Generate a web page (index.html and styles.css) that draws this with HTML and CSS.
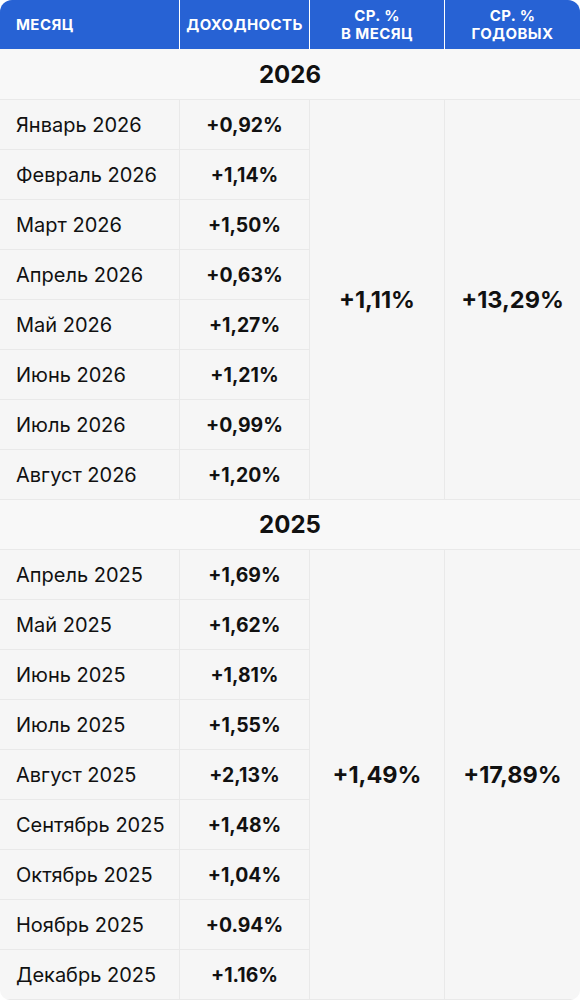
FILE: index.html
```html
<!DOCTYPE html>
<html lang="ru">
<head>
<meta charset="utf-8">
<link rel="stylesheet" href="styles.css">
</head>
<body>
<div class="tbl">
  <div class="hd hd-left">Месяц</div>
  <div class="hd">Доходность</div>
  <div class="hd">Ср. %<br>в месяц</div>
  <div class="hd hd-last">Ср. %<br>годовых</div>

  <div class="year">2026</div>
  <div class="m r1">Январь 2026</div><div class="v r1">+0,92%</div>
  <div class="big span8">+1,11%</div>
  <div class="big span8 last">+13,29%</div>
  <div class="m">Февраль 2026</div><div class="v">+1,14%</div>
  <div class="m">Март 2026</div><div class="v">+1,50%</div>
  <div class="m">Апрель 2026</div><div class="v">+0,63%</div>
  <div class="m">Май 2026</div><div class="v">+1,27%</div>
  <div class="m">Июнь 2026</div><div class="v">+1,21%</div>
  <div class="m">Июль 2026</div><div class="v">+0,99%</div>
  <div class="m">Август 2026</div><div class="v">+1,20%</div>

  <div class="year">2025</div>
  <div class="m">Апрель 2025</div><div class="v">+1,69%</div>
  <div class="big span9">+1,49%</div>
  <div class="big span9 last">+17,89%</div>
  <div class="m">Май 2025</div><div class="v">+1,62%</div>
  <div class="m">Июнь 2025</div><div class="v">+1,81%</div>
  <div class="m">Июль 2025</div><div class="v">+1,55%</div>
  <div class="m">Август 2025</div><div class="v">+2,13%</div>
  <div class="m">Сентябрь 2025</div><div class="v">+1,48%</div>
  <div class="m">Октябрь 2025</div><div class="v">+1,04%</div>
  <div class="m">Ноябрь 2025</div><div class="v">+0.94%</div>
  <div class="m">Декабрь 2025</div><div class="v">+1.16%</div>
</div>
</body>
</html>
```
FILE: styles.css
```css
html, body {
  margin: 0;
  padding: 0;
  background: #ffffff;
}
body {
  font-family: Inter, "Noto Sans", sans-serif;
  color: #111111;
}
.tbl {
  width: 580px;
  display: grid;
  grid-template-columns: 180px 130px 135px 135px;
  grid-template-rows: 50px;
  background: #f6f6f6;
  border-radius: 12px 12px 10px 10px;
  overflow: hidden;
}
.hd {
  height: 50px;
  box-sizing: border-box;
  border-bottom: 1px solid #f6f6f6;
  background: #2762d4;
  background-clip: padding-box;
  color: #ffffff;
  font-weight: 700;
  font-size: 15px;
  letter-spacing: 0.4px;
  line-height: 18px;
  text-transform: uppercase;
  display: flex;
  align-items: center;
  justify-content: center;
  text-align: center;
  border-right: 1px solid #ffffff;
}
.hd-left {
  justify-content: flex-start;
  padding-left: 16px;
}
.hd-last {
  border-right: none;
}
.year {
  grid-column: 1 / -1;
  height: 50px;
  box-sizing: border-box;
  border-bottom: 1px solid #e9e9e9;
  background: #f8f8f8;
  display: flex;
  align-items: center;
  justify-content: center;
  font-size: 24px;
  font-weight: 700;
}
.m, .v, .big {
  box-sizing: border-box;
  border-bottom: 1px solid #e9e9e9;
  border-right: 1px solid #e9e9e9;
  display: flex;
  align-items: center;
}
.m, .v {
  height: 50px;
}
.m {
  padding-left: 16px;
  font-size: 20px;
}
.v {
  justify-content: center;
  font-weight: 700;
  font-size: 19.4px;
}
.big {
  justify-content: center;
  font-size: 23.5px;
  font-weight: 700;
}
.big.last {
  border-right: none;
}
.span8 {
  grid-row: span 8;
}
.span9 {
  grid-row: span 9;
}
```
